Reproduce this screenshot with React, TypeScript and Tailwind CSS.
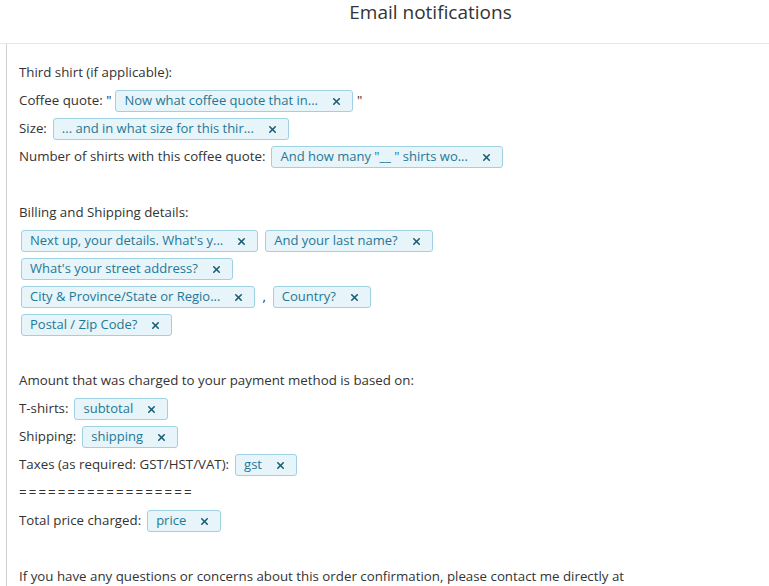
import { X } from "lucide-react";

type Part = string | { chip: string };

const Chip = ({ label }: { label: string }) => (
  <span className="inline-flex items-center h-[22px] pl-[8px] pr-[10px] rounded-[3px] border border-[#9fd1e2] bg-[#e7f4f9] text-[#1f7896] text-[13px] whitespace-nowrap">
    <span>{label}</span>
    <X size={11} strokeWidth={3.5} className="ml-[13px] text-[#1b5f78]" />
  </span>
);

const rows: Part[][] = [
  ["Third shirt (if applicable):"],
  ["Coffee quote: \"", { chip: "Now what coffee quote that in..." }, "\""],
  ["Size:", { chip: "... and in what size for this thir..." }],
  ["Number of shirts with this coffee quote:", { chip: "And how many \"__ \" shirts wo..." }],
  [],
  ["Billing and Shipping details:"],
  [{ chip: "Next up, your details. What's y..." }, { chip: "And your last name?" }],
  [{ chip: "What's your street address?" }],
  [{ chip: "City & Province/State or Regio..." }, ",", { chip: "Country?" }],
  [{ chip: "Postal / Zip Code?" }],
  [],
  ["Amount that was charged to your payment method is based on:"],
  ["T-shirts:", { chip: "subtotal" }],
  ["Shipping:", { chip: "shipping" }],
  ["Taxes (as required: GST/HST/VAT):", { chip: "gst" }],
  ["=================="],
  ["Total price charged:", { chip: "price" }],
  [],
  ["If you have any questions or concerns about this order confirmation, please contact me directly at"],
];

export default function App() {
  return (
    <div className="w-[769px] h-[586px] overflow-hidden bg-white text-[#333] text-[13.3px]" style={{ fontFamily: "'Open Sans', 'Noto Sans', sans-serif" }}>
      <header className="h-[44px] border-b border-[#e6e6e6] flex items-start justify-center pl-[92px]">
        <h1 className="text-[19px] leading-[24px] text-[#333] font-normal">Email notifications</h1>
      </header>
      <div className="ml-[6px] border-l border-[#cfcfcf] pl-[12px] pt-[15px]">
        {rows.map((r, i) => {
          const startsWithChip = r.length > 0 && typeof r[0] !== "string";
          const isRule = r.length === 1 && r[0] === "==================";
          return (
            <div key={i} className={`h-[28px] flex items-center ${startsWithChip ? "pl-[2px] gap-[7px]" : "gap-[4px]"}`}>
              {r.map((p, j) =>
                typeof p === "string" ? (
                  <span
                    key={j}
                    className={`whitespace-nowrap ${isRule ? "tracking-[2.1px]" : ""} ${p.endsWith(":") && r.length > 1 ? "mr-[2px]" : ""}`}
                  >
                    {p}
                  </span>
                ) : (
                  <Chip key={j} label={p.chip} />
                )
              )}
            </div>
          );
        })}
      </div>
    </div>
  );
}
